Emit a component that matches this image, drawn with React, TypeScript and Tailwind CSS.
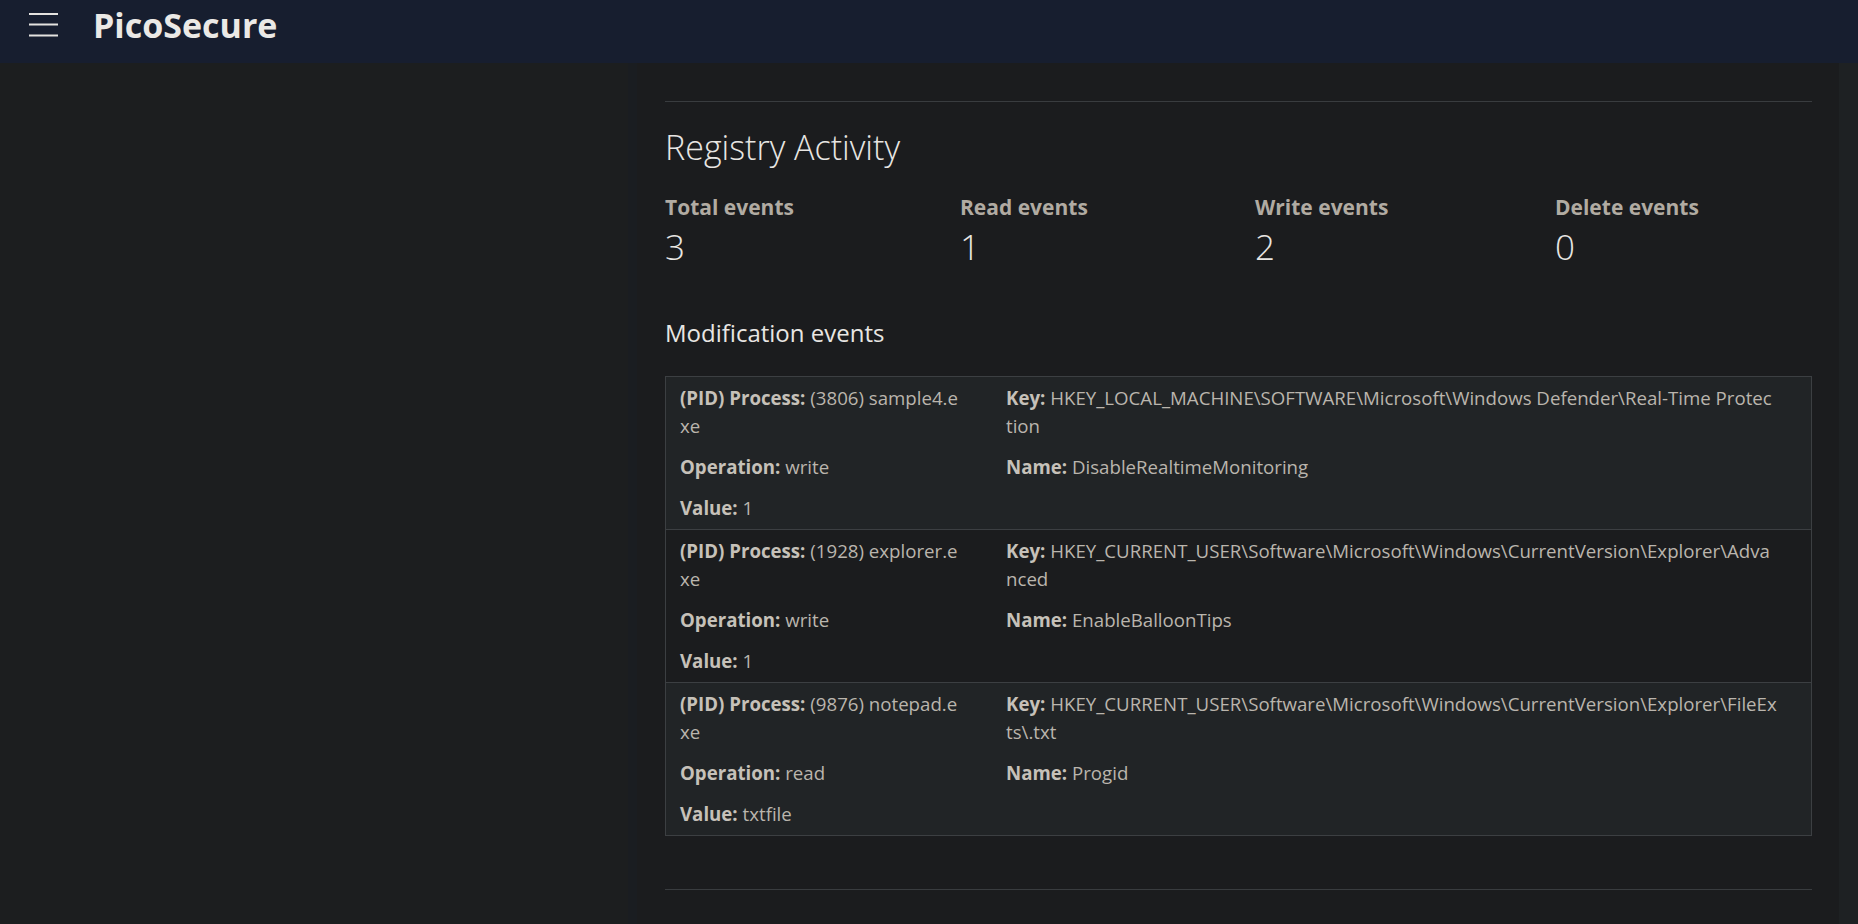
const events = [
  {
    pid: 3806,
    process: "sample4.exe",
    operation: "write",
    value: "1",
    key: "HKEY_LOCAL_MACHINE\\SOFTWARE\\Microsoft\\Windows Defender\\Real-Time Protection",
    name: "DisableRealtimeMonitoring",
  },
  {
    pid: 1928,
    process: "explorer.exe",
    operation: "write",
    value: "1",
    key: "HKEY_CURRENT_USER\\Software\\Microsoft\\Windows\\CurrentVersion\\Explorer\\Advanced",
    name: "EnableBalloonTips",
  },
  {
    pid: 9876,
    process: "notepad.exe",
    operation: "read",
    value: "txtfile",
    key: "HKEY_CURRENT_USER\\Software\\Microsoft\\Windows\\CurrentVersion\\Explorer\\FileExts\\.txt",
    name: "Progid",
  },
];

const stats = [
  { label: "Total events", value: 3 },
  { label: "Read events", value: 1 },
  { label: "Write events", value: 2 },
  { label: "Delete events", value: 0 },
];

function Field({ label, children }: { label: string; children: React.ReactNode }) {
  return (
    <p className="break-all">
      <span className="font-bold text-[#c6c1b9]">{label}</span> {children}
    </p>
  );
}

function Header() {
  return (
    <header className="h-[63px] shrink-0 bg-[#171e2f]">
      <div className="h-[49px] flex items-center pl-[29px] gap-[35px]">
        <svg width="29" height="24" viewBox="0 0 29 24" className="shrink-0">
          <rect x="0" y="0" width="29" height="2" fill="#e4e2df" />
          <rect x="0" y="10.5" width="29" height="2" fill="#e4e2df" />
          <rect x="0" y="21.5" width="29" height="2" fill="#e4e2df" />
        </svg>
        <span className="text-[34px] leading-none font-bold text-[#ebe9e6]">PicoSecure</span>
      </div>
    </header>
  );
}

export default function App() {
  return (
    <div className="h-[924px] w-full flex flex-col overflow-hidden bg-[#1b1c1e] font-['Open_Sans',sans-serif]">
      <Header />
      <div className="flex flex-1 min-h-0">
        <aside className="w-[628px] shrink-0 bg-[#1c1e1f]" />
        <div className="w-[9px] shrink-0 bg-[#1a1d21]" />
        <main className="flex-1 pl-[28px] pr-[27px] pt-[38px]">
          <div className="border-t border-[#393c3f]" />
          <h2 className="mt-[24px] text-[34px] leading-[42px] font-light text-[#e8e6e3]">Registry Activity</h2>

          <div className="mt-[27px] grid grid-cols-[295px_295px_300px_1fr]">
            {stats.map((s) => (
              <div key={s.label}>
                <div className="text-[21px] leading-[25px] font-bold text-[#b1aba2]">{s.label}</div>
                <div className="mt-[6px] text-[35px] leading-[42px] font-light text-[#e8e6e3]">{s.value}</div>
              </div>
            ))}
          </div>

          <h3 className="mt-[50px] text-[24px] leading-[29px] font-normal text-[#e8e6e3]">Modification events</h3>

          <div className="mt-[29px] border border-[#3c3f42] text-[18.67px] leading-[28px] text-[#bab5ad]">
            {events.map((e, i) => (
              <div
                key={e.pid}
                className={
                  "grid grid-cols-[282px_1fr] gap-x-[44px] pl-[14px] pr-[34px] pt-[7px] pb-[7px] " +
                  (i % 2 === 0 ? "bg-[#212426]" : "bg-[#1b1c1e]") +
                  (i > 0 ? " border-t border-[#3c3f42]" : "")
                }
              >
                <div className="flex flex-col gap-[13px]">
                  <Field label="(PID) Process:">
                    ({e.pid}) {e.process}
                  </Field>
                  <Field label="Operation:">{e.operation}</Field>
                  <Field label="Value:">{e.value}</Field>
                </div>
                <div className="flex flex-col gap-[13px]">
                  <Field label="Key:">{e.key}</Field>
                  <Field label="Name:">{e.name}</Field>
                </div>
              </div>
            ))}
          </div>

          <div className="mt-[53px] border-t border-[#393c3f]" />
        </main>
        <div className="w-[19px] shrink-0 bg-[#1e2123]" />
      </div>
    </div>
  );
}
